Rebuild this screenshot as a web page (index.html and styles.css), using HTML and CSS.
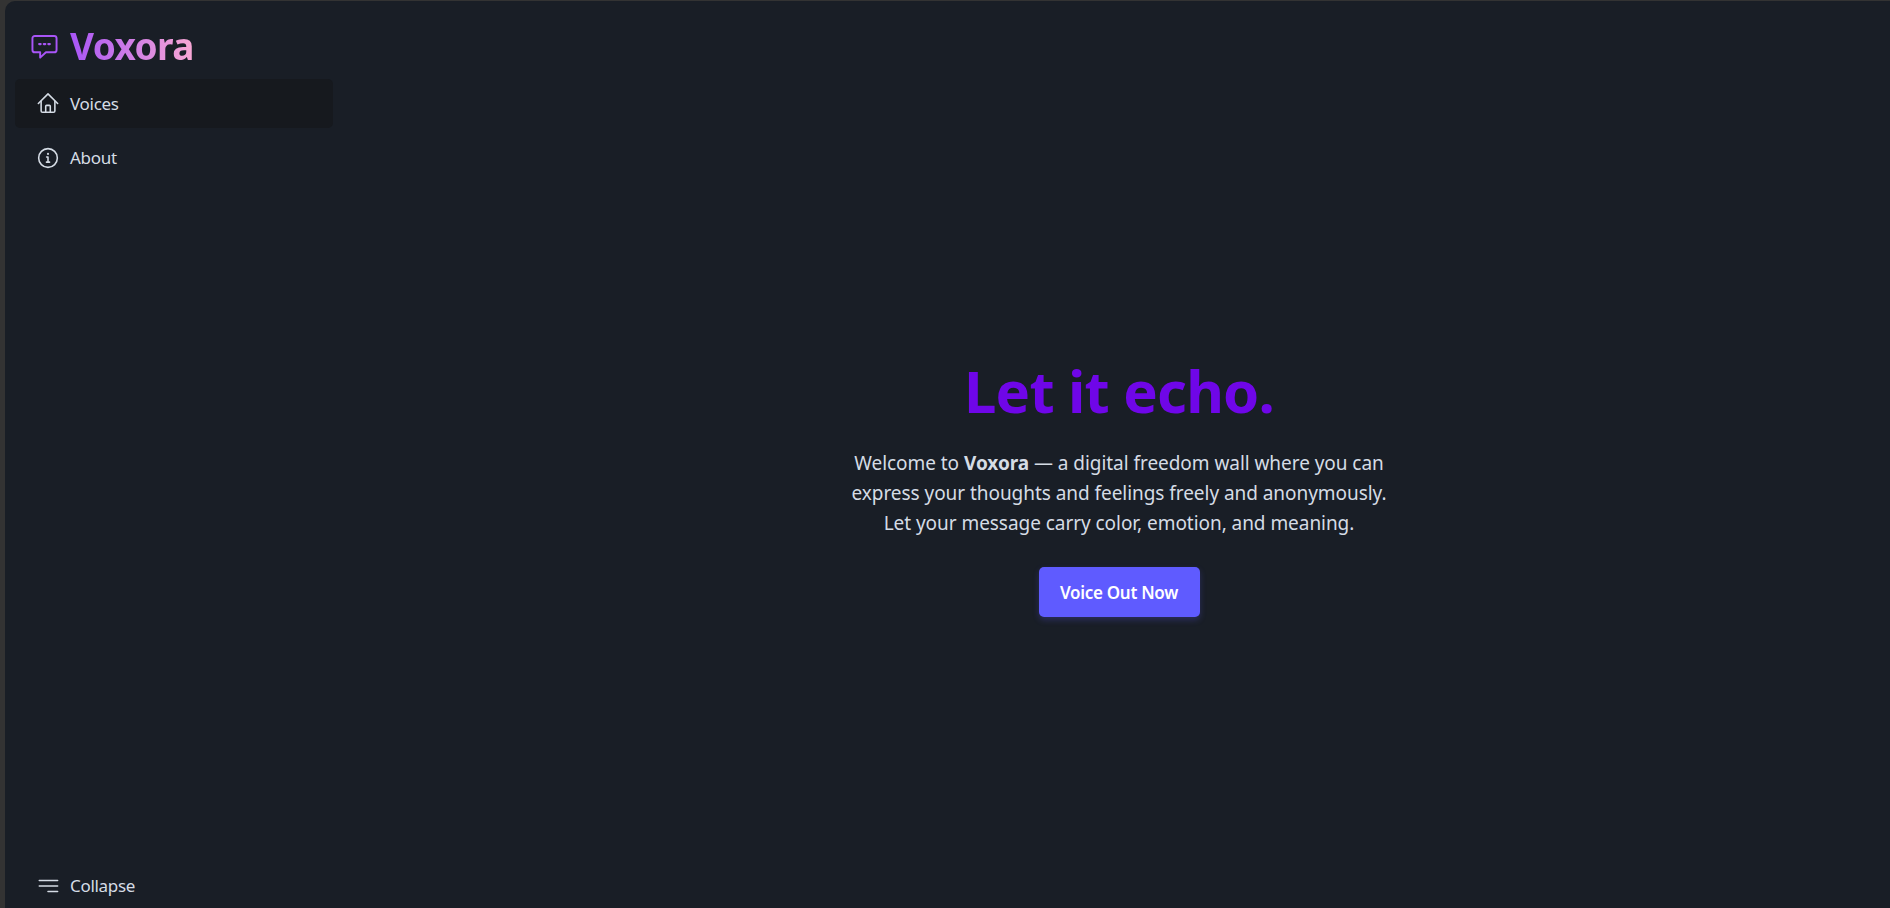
FILE: index.html
```html
<!DOCTYPE html>
<html>
<head>
    <meta charset="UTF-8">
    <title>Voxora</title>
    <link rel="stylesheet" href="styles.css">
</head>
<body>
    <div class="app">
        <aside class="sidebar">
            <div class="logo">
                <svg class="logo-icon" viewBox="0 0 28 26" fill="none" stroke="#a855f7" stroke-width="2" stroke-linejoin="round">
                    <path d="M4 1.500h20a2.500 2.500 0 0 1 2.500 2.500v12a2.500 2.500 0 0 1-2.500 2.500h-8.500l-6 5.500v-5.500H4A2.500 2.500 0 0 1 1.500 16V4A2.500 2.500 0 0 1 4 1.500z"/>
                    <path d="M8.500 10h1.500M13.300 10h1.500M18 10h1.500" stroke-linecap="round" stroke-width="2.300"/>
                </svg>
                <span class="logo-text">Voxora</span>
            </div>
            <nav class="nav">
                <a class="nav-item active">
                    <svg class="nav-icon" viewBox="0 1 24 24" fill="none" stroke="currentColor" stroke-width="1.700" stroke-linecap="round" stroke-linejoin="round">
                        <path d="M1.500 12.500 12 2l10.500 10.500"/>
                        <path d="M4.500 10v10.500a1.500 1.500 0 0 0 1.500 1.500h12a1.500 1.500 0 0 0 1.500-1.500V10"/>
                        <path d="M9.500 22v-6.500a1 1 0 0 1 1-1h3a1 1 0 0 1 1 1V22"/>
                    </svg>
                    <span>Voices</span>
                </a>
                <a class="nav-item">
                    <svg class="nav-icon" viewBox="0 0 24 24" fill="none" stroke="currentColor" stroke-width="1.700" stroke-linecap="round" stroke-linejoin="round">
                        <circle cx="12" cy="12" r="10.200"/>
                        <path d="M10.500 11h1.500v5.500M10.300 16.500h3.400"/>
                        <path d="M12 7.300v.4" stroke-width="2.200"/>
                    </svg>
                    <span>About</span>
                </a>
            </nav>
            <a class="nav-item collapse">
                <svg class="nav-icon" viewBox="0 0 24 24" fill="none" stroke="currentColor" stroke-width="1.700" stroke-linecap="round">
                    <path d="M2.500 6h20M2.500 12h20M12 18h10.500"/>
                </svg>
                <span>Collapse</span>
            </a>
        </aside>
        <main class="main">
            <h1>Let it echo.</h1>
            <p>Welcome to <strong>Voxora</strong> — a digital freedom wall where you can<br>express your thoughts and feelings freely and anonymously.<br>Let your message carry color, emotion, and meaning.</p>
            <button class="cta">Voice Out Now</button>
        </main>
    </div>
</body>
</html>
```

FILE: styles.css
```css
html, body {
    height: 100%;
}
body {
    margin: 0;
    background-color: #333;
    font-family: "Noto Sans", "Open Sans", sans-serif;
    overflow: hidden;
}
.app {
    display: flex;
    height: 907px;
    margin: 1px 0 0 5px;
    background-color: #191e26;
    border-top-left-radius: 10px;
}
.sidebar {
    display: flex;
    flex-direction: column;
    width: 343px;
    box-sizing: border-box;
    padding: 19px 15px 0 10px;
}
.logo {
    display: flex;
    align-items: center;
    gap: 12px;
    height: 50px;
    padding-left: 16px;
    margin-bottom: 9px;
}
.logo-icon {
    width: 27px;
    height: 26px;
    margin-top: 3px;
}
.logo-text {
    font-size: 37px;
    font-weight: 700;
    letter-spacing: -0.6px;
    background: linear-gradient(90deg, #a855f7, #f9a8d4);
    -webkit-background-clip: text;
    background-clip: text;
    color: transparent;
}
.nav {
    display: flex;
    flex-direction: column;
    gap: 5px;
    flex: 1;
}
.nav-item {
    display: flex;
    align-items: center;
    gap: 11px;
    height: 49px;
    padding-left: 22px;
    border-radius: 5px;
    color: #d5dce5;
    font-size: 17px;
    letter-spacing: -0.3px;
}
.nav-item.active {
    background-color: #16191e;
}
.nav-icon {
    width: 22px;
    height: 22px;
    flex-shrink: 0;
}
.collapse {
    margin-bottom: -2px;
}
.main {
    flex: 1;
    display: flex;
    flex-direction: column;
    align-items: center;
    padding-top: 348px;
}
h1 {
    margin: 0 0 15px;
    color: #6f06e8;
    font-size: 58px;
    font-weight: 700;
    line-height: 84px;
    letter-spacing: -0.8px;
}
p {
    margin: 0 0 29px;
    color: #d5dce5;
    font-size: 19px;
    line-height: 30px;
    text-align: center;
    letter-spacing: -0.05px;
}
p strong {
    font-weight: 700;
}
.cta {
    width: 161px;
    height: 50px;
    border: none;
    border-radius: 5px;
    background-color: #5f5bff;
    color: #fff;
    font-family: inherit;
    font-size: 17px;
    font-weight: 600;
    letter-spacing: -0.3px;
    box-shadow: 0 3px 6px rgba(95, 91, 255, 0.25);
    cursor: pointer;
}
```
